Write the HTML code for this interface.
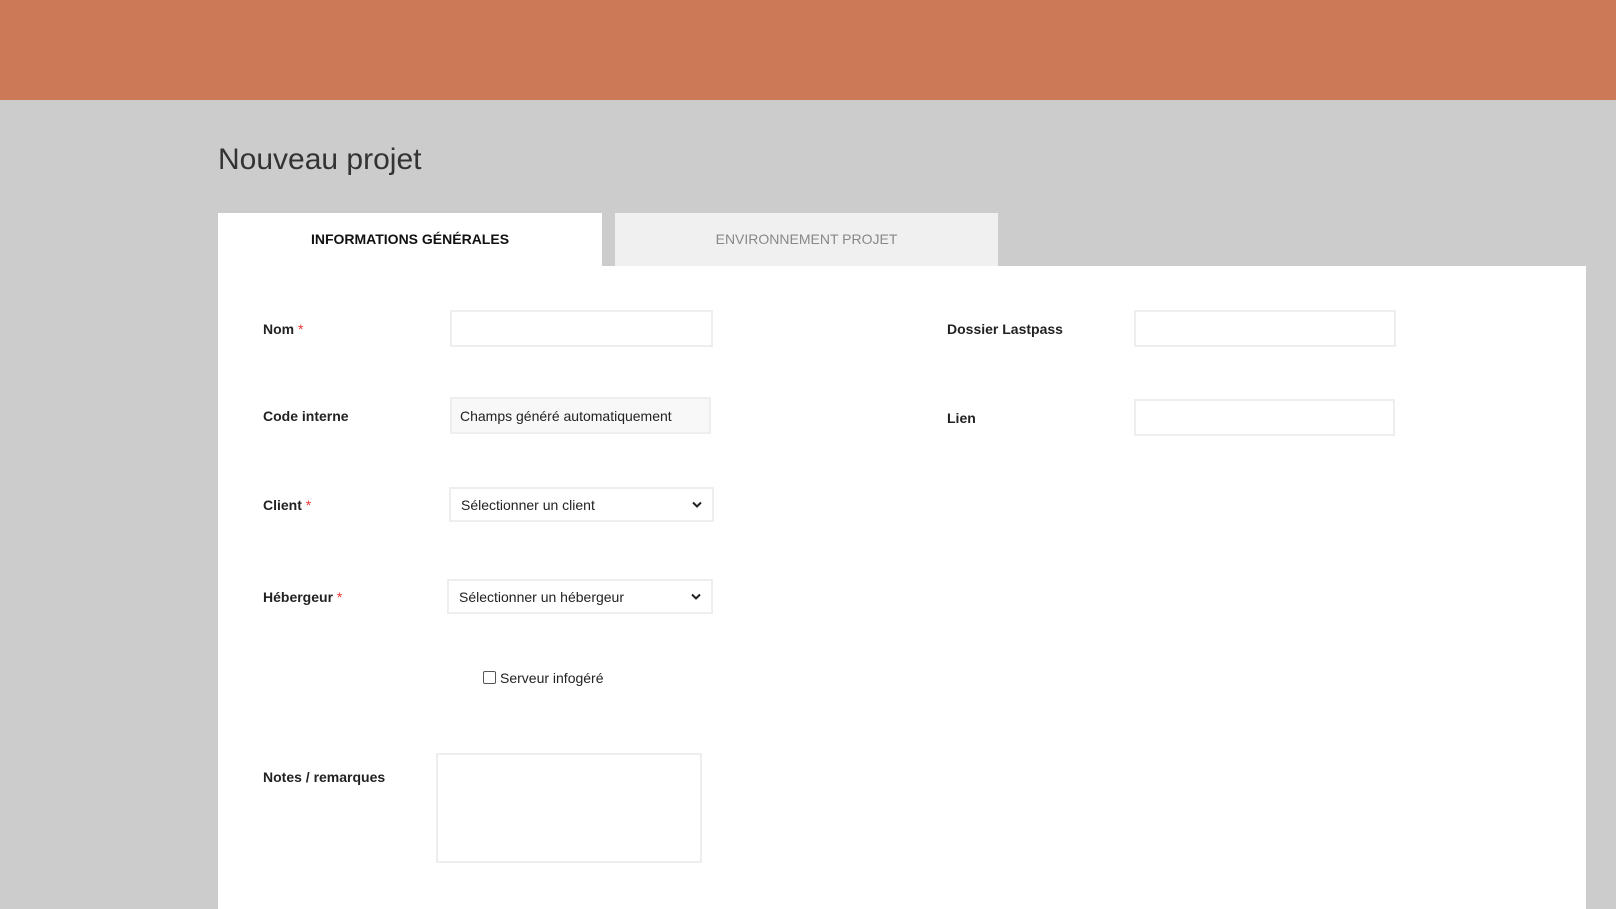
<!DOCTYPE html>
<html><head><meta charset="utf-8"><style>
*{box-sizing:border-box;margin:0;padding:0}
body{width:1616px;height:909px;background:#cccccc;font-family:"Liberation Sans",Arial,sans-serif;position:relative;overflow:hidden;color:#222}
.hdr{position:absolute;left:0;top:0;width:1616px;height:100px;background:#cc7957}
h1{position:absolute;left:218px;top:143px;font-size:30px;font-weight:normal;color:#333}
.tab{position:absolute;top:213px;height:53px;line-height:53px;text-align:center;font-size:14px}
.t1{left:218px;width:384px;background:#fff;font-weight:bold;color:#111}
.t2{left:615px;width:383px;background:#f0f0f0;color:#888}
.panel{position:absolute;left:218px;top:266px;width:1368px;height:643px;background:#fff}
.lab{position:absolute;font-size:14px;font-weight:bold;color:#222;transform:translateY(-50%)}
.lab span{color:#e33;font-weight:normal}
.box{position:absolute;border:2px solid #eee;background:#fff;font-size:14px;color:#222;display:flex;align-items:center}
.sel{justify-content:space-between;padding:0 10px}
.chk{position:absolute;left:483px;top:671px;width:13px;height:13px;border:1px solid #555;border-radius:2px;background:#fff}
.ct{position:absolute;left:500px;top:670px;font-size:14px;color:#222}
</style></head><body>
<div class="hdr"></div>
<h1>Nouveau projet</h1>
<div class="tab t1">INFORMATIONS GÉNÉRALES</div>
<div class="tab t2">ENVIRONNEMENT PROJET</div>
<div class="panel"></div>
<div class="lab" style="left:263px;top:329px">Nom <span>*</span></div>
<div class="box" style="left:450px;top:310px;width:263px;height:37px"></div>
<div class="lab" style="left:263px;top:416px">Code interne</div>
<div class="box" style="left:450px;top:397px;width:261px;height:37px;background:#f8f8f8;padding-left:8px">Champs généré automatiquement</div>
<div class="lab" style="left:263px;top:505px">Client <span>*</span></div>
<div class="box sel" style="left:449px;top:487px;width:265px;height:35px"><span>Sélectionner un client</span><svg width="10" height="7" viewBox="0 0 10 7"><path d="M1 1.5l4 4 4-4" fill="none" stroke="#222" stroke-width="2"/></svg></div>
<div class="lab" style="left:263px;top:597px">Hébergeur <span>*</span></div>
<div class="box sel" style="left:447px;top:579px;width:266px;height:35px"><span>Sélectionner un hébergeur</span><svg width="10" height="7" viewBox="0 0 10 7"><path d="M1 1.5l4 4 4-4" fill="none" stroke="#222" stroke-width="2"/></svg></div>
<div class="chk"></div><div class="ct">Serveur infogéré</div>
<div class="lab" style="left:263px;top:777px">Notes / remarques</div>
<div class="box" style="left:436px;top:753px;width:266px;height:110px"></div>
<div class="lab" style="left:947px;top:329px">Dossier Lastpass</div>
<div class="box" style="left:1134px;top:310px;width:262px;height:37px"></div>
<div class="lab" style="left:947px;top:418px">Lien</div>
<div class="box" style="left:1134px;top:399px;width:261px;height:37px"></div>
</body></html>
